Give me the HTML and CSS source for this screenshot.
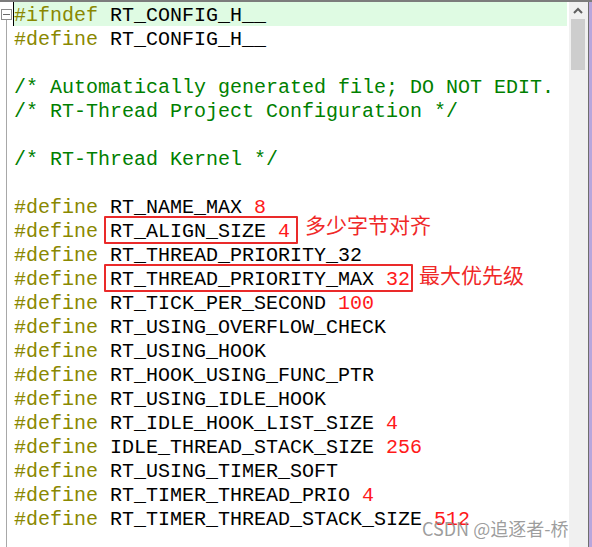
FILE: index.html
```html
<!DOCTYPE html>
<html lang="zh">
<head>
<meta charset="utf-8">
<title>rtconfig.h</title>
<link rel="stylesheet" href="styles.css">
</head>
<body>
<div class="window">
  <div class="editor">
    <div class="gutter">
      <div class="fold"><span class="minus"></span></div>
      <div class="fold-line"></div>
    </div>
    <div class="code">
      <div class="line current"><span class="kw">#ifndef</span> RT_CONFIG_H__</div>
      <div class="line"><span class="kw">#define</span> RT_CONFIG_H__</div>
      <div class="line"></div>
      <div class="line cm">/* Automatically generated file; DO NOT EDIT. */</div>
      <div class="line cm">/* RT-Thread Project Configuration */</div>
      <div class="line"></div>
      <div class="line cm">/* RT-Thread Kernel */</div>
      <div class="line"></div>
      <div class="line"><span class="kw">#define</span> RT_NAME_MAX <span class="num">8</span></div>
      <div class="line"><span class="kw">#define</span> <span class="mark mark-a">RT_ALIGN_SIZE <span class="num">4</span></span><span class="note note-a">多少字节对齐</span></div>
      <div class="line"><span class="kw">#define</span> RT_THREAD_PRIORITY_32</div>
      <div class="line"><span class="kw">#define</span> <span class="mark mark-b">RT_THREAD_PRIORITY_MAX <span class="num">32</span></span><span class="note note-b">最大优先级</span></div>
      <div class="line"><span class="kw">#define</span> RT_TICK_PER_SECOND <span class="num">100</span></div>
      <div class="line"><span class="kw">#define</span> RT_USING_OVERFLOW_CHECK</div>
      <div class="line"><span class="kw">#define</span> RT_USING_HOOK</div>
      <div class="line"><span class="kw">#define</span> RT_HOOK_USING_FUNC_PTR</div>
      <div class="line"><span class="kw">#define</span> RT_USING_IDLE_HOOK</div>
      <div class="line"><span class="kw">#define</span> RT_IDLE_HOOK_LIST_SIZE <span class="num">4</span></div>
      <div class="line"><span class="kw">#define</span> IDLE_THREAD_STACK_SIZE <span class="num">256</span></div>
      <div class="line"><span class="kw">#define</span> RT_USING_TIMER_SOFT</div>
      <div class="line"><span class="kw">#define</span> RT_TIMER_THREAD_PRIO <span class="num">4</span></div>
      <div class="line"><span class="kw">#define</span> RT_TIMER_THREAD_STACK_SIZE <span class="num">512</span></div>
    </div>
    <div class="gap"></div>
  </div>
  <div class="scrollbar">
    <div class="arrow">
      <svg width="10" height="7" viewBox="0 0 10 7"><polyline points="1,6 5,2 9,6" fill="none" stroke="#5f5f5f" stroke-width="2"/></svg>
    </div>
    <div class="thumb"></div>
  </div>
  <div class="edge"></div>
</div>
<div class="watermark">CSDN @追逐者-桥</div>
</body>
</html>
```

FILE: styles.css
```css
html, body {
  margin: 0;
  padding: 0;
  background: #ffffff;
}

body {
  width: 592px;
  height: 547px;
  overflow: hidden;
  position: relative;
}

.window {
  display: flex;
  height: 547px;
  border-top: 2px solid #7c7c7c;
  box-sizing: border-box;
}

.editor {
  display: flex;
  width: 569px;
  background: #ffffff;
}

.gutter {
  width: 13px;
  display: flex;
  flex-direction: column;
  padding-top: 7px;
  box-sizing: border-box;
}

.fold {
  width: 11px;
  height: 11px;
  margin-left: 1px;
  border: 1px solid #8c8c8c;
  box-sizing: border-box;
  background: #ffffff;
  display: flex;
  align-items: center;
  justify-content: center;
}

.minus {
  width: 7px;
  height: 1px;
  background: #6a6a6a;
}

.fold-line {
  flex: 1;
  width: 1px;
  margin-left: 6px;
  background: #a8a8a8;
}

.code {
  width: 554px;
  overflow: hidden;
  font-family: "Liberation Mono", "DejaVu Sans Mono", monospace;
  font-size: 20px;
  color: #000000;
}

.gap {
  width: 2px;
}

.line {
  height: 24px;
  line-height: 28px;
  padding-left: 1px;
  white-space: pre;
  overflow: visible;
}

.current {
  background: linear-gradient(to right, #000000 1px, #dffbe3 1px);
}

.kw {
  color: #8a8800;
}

.cm {
  color: #008000;
}

.num {
  color: #ff1a1a;
}

.mark {
  position: relative;
}

.mark::before {
  content: "";
  position: absolute;
  top: -4px;
  bottom: -1px;
  left: -6px;
  border: 2px solid #ea2a2a;
  border-radius: 1px;
}

.mark-a::before {
  right: -8px;
}

.mark-b::before {
  right: -3px;
}

.note {
  font-family: "Noto Sans CJK SC", "Noto Sans", sans-serif;
  font-size: 21px;
  line-height: 0;
  color: #f02828;
}

.note-a {
  margin-left: 15px;
  vertical-align: 4px;
}

.note-b {
  margin-left: 9px;
  vertical-align: 2px;
}

.scrollbar {
  width: 19px;
  background: #f0f0f0;
  display: flex;
  flex-direction: column;
}

.arrow {
  height: 17px;
  display: flex;
  align-items: center;
  justify-content: center;
  padding-right: 1px;
}

.thumb {
  height: 51px;
  width: 14px;
  margin-left: 2px;
  background: #cdcdcd;
}

.edge {
  width: 4px;
  border-left: 1px solid #6e6e6e;
  box-sizing: border-box;
  background: #b8a6dc;
}

.watermark {
  position: absolute;
  left: 422px;
  top: 516px;
  font-family: "Noto Sans CJK SC", "Noto Sans", sans-serif;
  font-size: 18px;
  line-height: 24px;
  color: rgba(140, 140, 140, 0.85);
  white-space: nowrap;
}
```
